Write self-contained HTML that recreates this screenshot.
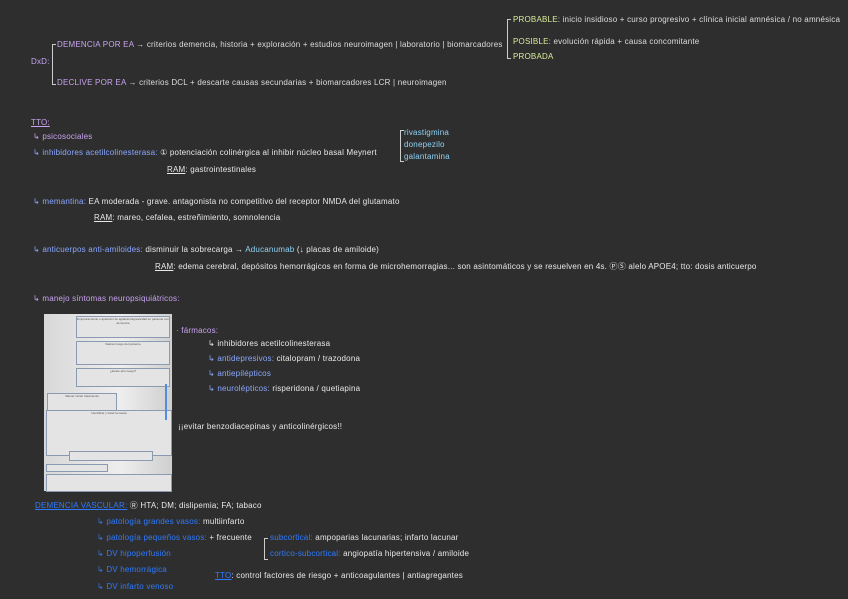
<!DOCTYPE html>
<html><head><meta charset="utf-8"><style>
body{margin:0;width:848px;height:599px;background:#2e2e2e;font-family:"Liberation Sans",sans-serif;overflow:hidden;position:relative}
.t{position:absolute;font-size:8px;color:#e8e8e8;white-space:nowrap;line-height:10px;letter-spacing:0.2px}
.p{color:#c9a3f0}.b{color:#8aa8ff}.g{color:#d8ec9a}.c{color:#8fd3f5}.bl{color:#2f7bff}
.br{position:absolute;border:1px solid #ccc;border-right:none}
.img{position:absolute;left:44px;top:314px;width:128px;height:177px;background:linear-gradient(90deg,#d8d8d8,#eee 60%,#cfcfcf)}
.bx{position:absolute;border:1px solid #8a9ab0;background:#e4e4e4;font-size:3px;color:#555;text-align:center}
.ar{position:absolute;width:2px;background:#4f8ee0}
</style></head><body>
<div class="t g" style="left:513px;top:15px">PROBABLE<span style="color:#ddd">: inicio insidioso + curso progresivo + clínica inicial amnésica / no amnésica</span></div>
<div class="t g" style="left:513px;top:37px">POSIBLE<span style="color:#ddd">: evolución rápida + causa concomitante</span></div>
<div class="t g" style="left:513px;top:52px">PROBADA</div>
<div class="br" style="left:507px;top:19px;width:3px;height:38px"></div>
<div class="t p" style="left:31px;top:57px">DxD:</div>
<div class="br" style="left:52px;top:44px;width:3px;height:39px"></div>
<div class="t p" style="left:57px;top:40px">DEMENCIA POR EA <span style="color:#ddd">→ criterios demencia, historia + exploración + estudios neuroimagen | laboratorio | biomarcadores</span></div>
<div class="t p" style="left:57px;top:78px">DECLIVE POR EA <span style="color:#ddd">→ criterios DCL + descarte causas secundarias + biomarcadores LCR | neuroimagen</span></div>
<div class="t p" style="left:31px;top:118px;text-decoration:underline">TTO:</div>
<div class="t p" style="left:33px;top:132px">↳ psicosociales</div>
<div class="t" style="left:33px;top:148px"><span class="b">↳ inhibidores acetilcolinesterasa:</span> ① potenciación colinérgica al inhibir núcleo basal Meynert</div>
<div class="br" style="left:400px;top:130px;width:3px;height:30px"></div>
<div class="t c" style="left:404px;top:128px">rivastigmina</div>
<div class="t c" style="left:404px;top:140px">donepezilo</div>
<div class="t c" style="left:404px;top:152px">galantamina</div>
<div class="t" style="left:167px;top:165px"><u>RAM</u>: gastrointestinales</div>
<div class="t" style="left:33px;top:197px"><span class="b">↳ memantina:</span> EA moderada - grave. antagonista no competitivo del receptor NMDA del glutamato</div>
<div class="t" style="left:94px;top:213px"><u>RAM</u>: mareo, cefalea, estreñimiento, somnolencia</div>
<div class="t" style="left:33px;top:245px"><span class="b">↳ anticuerpos anti-amiloides:</span> disminuir la sobrecarga → <span class="c">Aducanumab</span> (↓ placas de amiloide)</div>
<div class="t" style="left:155px;top:262px"><u>RAM</u>: edema cerebral, depósitos hemorrágicos en forma de microhemorragias... son asintomáticos y se resuelven en 4s. ⓅⓈ alelo APOE4; tto: dosis anticuerpo</div>
<div class="t p" style="left:33px;top:294px">↳ manejo síntomas neuropsiquiátricos:</div>
<div class="img">
<div class="bx" style="left:32px;top:2px;width:92px;height:20px">Empeoramiento o aparición de agitación/agresividad en paciente con demencia</div>
<div class="bx" style="left:32px;top:27px;width:92px;height:22px">Valorar riesgo del paciente</div>
<div class="bx" style="left:32px;top:54px;width:92px;height:17px">¿Existe alto riesgo?</div>
<div class="bx" style="left:3px;top:79px;width:68px;height:22px">Valorar iniciar tratamiento</div>
<div class="bx" style="left:2px;top:96px;width:124px;height:44px;top:96px">Identificar y tratar la causa</div>
<div class="bx" style="left:25px;top:137px;width:82px;height:8px"></div>
<div class="bx" style="left:2px;top:150px;width:60px;height:6px"></div>
<div class="bx" style="left:2px;top:160px;width:124px;height:16px"></div>
<div class="ar" style="left:121px;top:70px;height:36px"></div>
</div>
<div class="t p" style="left:176px;top:326px">· fármacos:</div>
<div class="t" style="left:208px;top:339px">↳ inhibidores acetilcolinesterasa</div>
<div class="t" style="left:208px;top:354px"><span class="b">↳ antidepresivos:</span> citalopram / trazodona</div>
<div class="t b" style="left:208px;top:369px">↳ antiepilépticos</div>
<div class="t" style="left:208px;top:384px"><span class="b">↳ neurolépticos:</span> risperidona / quetiapina</div>
<div class="t" style="left:178px;top:422px">¡¡evitar benzodiacepinas y anticolinérgicos!!</div>
<div class="t" style="left:35px;top:501px"><span class="bl" style="text-decoration:underline">DEMENCIA VASCULAR:</span> Ⓡ HTA; DM; dislipemia; FA; tabaco</div>
<div class="t" style="left:97px;top:517px"><span class="bl">↳ patología grandes vasos:</span> multiinfarto</div>
<div class="t" style="left:97px;top:533px"><span class="bl">↳ patología pequeños vasos:</span> + frecuente</div>
<div class="br" style="left:264px;top:538px;width:3px;height:20px"></div>
<div class="t" style="left:270px;top:533px"><span class="bl">subcortical:</span> ampoparias lacunarias; infarto lacunar</div>
<div class="t" style="left:270px;top:549px"><span class="bl">cortico-subcortical:</span> angiopatía hipertensiva / amiloide</div>
<div class="t bl" style="left:97px;top:549px">↳ DV hipoperfusión</div>
<div class="t bl" style="left:97px;top:565px">↳ DV hemorrágica</div>
<div class="t bl" style="left:97px;top:582px">↳ DV infarto venoso</div>
<div class="t" style="left:215px;top:571px"><span class="bl" style="text-decoration:underline">TTO</span>: control factores de riesgo + anticoagulantes | antiagregantes</div>
</body></html>
